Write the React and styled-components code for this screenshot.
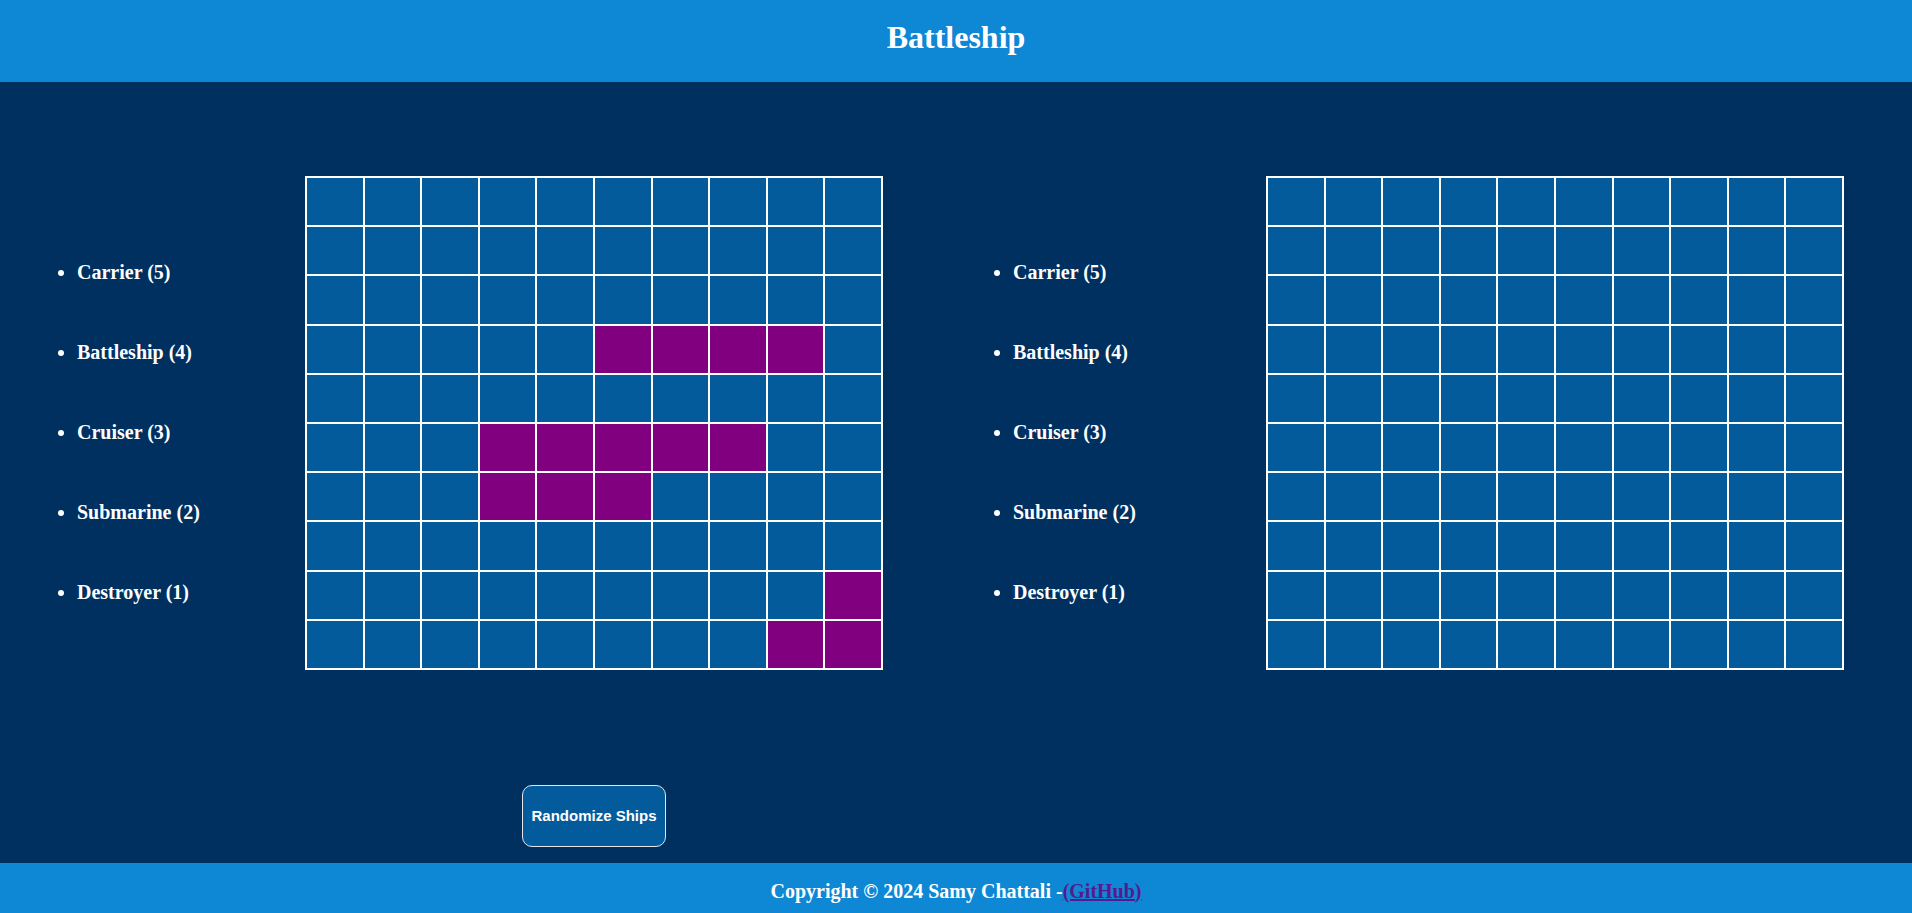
import styled, { createGlobalStyle } from "styled-components";

const GlobalStyle = createGlobalStyle`
  html, body {
    margin: 0;
    padding: 0;
  }
  body {
    font-family: "Liberation Serif", "Times New Roman", serif;
    background: #003060;
  }
`;

const Page = styled.div`
  display: flex;
  flex-direction: column;
  height: 100vh;
  overflow: hidden;
`;

const Header = styled.header`
  height: 82px;
  box-sizing: border-box;
  padding-top: 19px;
  background: #0e87d5;
  text-align: center;
`;

const Title = styled.h1`
  margin: 0;
  font-size: 32px;
  line-height: 36px;
  font-weight: bold;
  color: #ffffff;
`;

const Main = styled.main`
  flex: 1;
  display: flex;
  align-items: flex-start;
  gap: 90px;
  padding: 94px 0 0 37px;
  background: #003060;
`;

const PlayerArea = styled.section`
  display: flex;
  align-items: flex-start;
  gap: ${({ $gap }) => $gap};
`;

const List = styled.ul`
  width: 163px;
  box-sizing: border-box;
  margin: 85px 0 0;
  padding-left: 40px;
  list-style: disc;
  color: #ffffff;
`;

const Item = styled.li`
  font-size: 20px;
  font-weight: bold;
  line-height: 23px;
  white-space: nowrap;
  margin-bottom: 57px;
  &:last-child {
    margin-bottom: 0;
  }
`;

const BoardColumn = styled.div`
  display: flex;
  flex-direction: column;
  align-items: center;
  gap: 115px;
`;

const Grid = styled.div`
  display: grid;
  grid-template-columns: repeat(10, 1fr);
  grid-auto-rows: 49.2px;
  width: 578px;
  box-sizing: border-box;
  border: 1px solid #ffffff;
`;

const Cell = styled.div`
  border: 1px solid #ffffff;
  background: ${({ $ship }) => ($ship ? "#800080" : "#045b9c")};
`;

const Button = styled.button`
  width: 144px;
  height: 62px;
  border: 1px solid #e6e6e6;
  border-radius: 10px;
  background: #045b9c;
  color: #ffffff;
  font-family: "Liberation Sans", Arial, sans-serif;
  font-size: 15px;
  font-weight: bold;
  cursor: pointer;
`;

const Footer = styled.footer`
  height: 50px;
  box-sizing: border-box;
  padding-top: 6px;
  display: flex;
  align-items: center;
  justify-content: center;
  background: #0e87d5;
  color: #ffffff;
  font-size: 20px;
  font-weight: bold;
`;

const Link = styled.a`
  color: #551a8b;
  text-decoration: underline;
`;

// cells that hold a ship on the player's board, as "row-col"
const shipCells = new Set([
  "3-5", "3-6", "3-7", "3-8",
  "5-3", "5-4", "5-5", "5-6", "5-7",
  "6-3", "6-4", "6-5",
  "8-9", "9-8", "9-9",
]);

const ships = [
  { name: "Carrier", size: 5 },
  { name: "Battleship", size: 4 },
  { name: "Cruiser", size: 3 },
  { name: "Submarine", size: 2 },
  { name: "Destroyer", size: 1 },
];

const Board = ({ showShips }) => {
  const cells = [];
  for (let r = 0; r < 10; r++) {
    for (let c = 0; c < 10; c++) {
      cells.push(
        <Cell key={`${r}-${c}`} $ship={showShips && shipCells.has(`${r}-${c}`)} />
      );
    }
  }
  return <Grid>{cells}</Grid>;
};

const ShipList = () => (
  <List>
    {ships.map((s) => (
      <Item key={s.name}>
        {s.name} ({s.size})
      </Item>
    ))}
  </List>
);

const App = () => {
  return (
    <>
      <GlobalStyle />
      <Page>
        <Header>
          <Title>Battleship</Title>
        </Header>
        <Main>
          <PlayerArea $gap="105px">
            <ShipList />
            <BoardColumn>
              <Board showShips />
              <Button>Randomize Ships</Button>
            </BoardColumn>
          </PlayerArea>
          <PlayerArea $gap="130px">
            <ShipList />
            <BoardColumn>
              <Board />
            </BoardColumn>
          </PlayerArea>
        </Main>
        <Footer>
          Copyright © 2024 Samy Chattali -<Link href="#">(GitHub)</Link>
        </Footer>
      </Page>
    </>
  );
};

export default App;
